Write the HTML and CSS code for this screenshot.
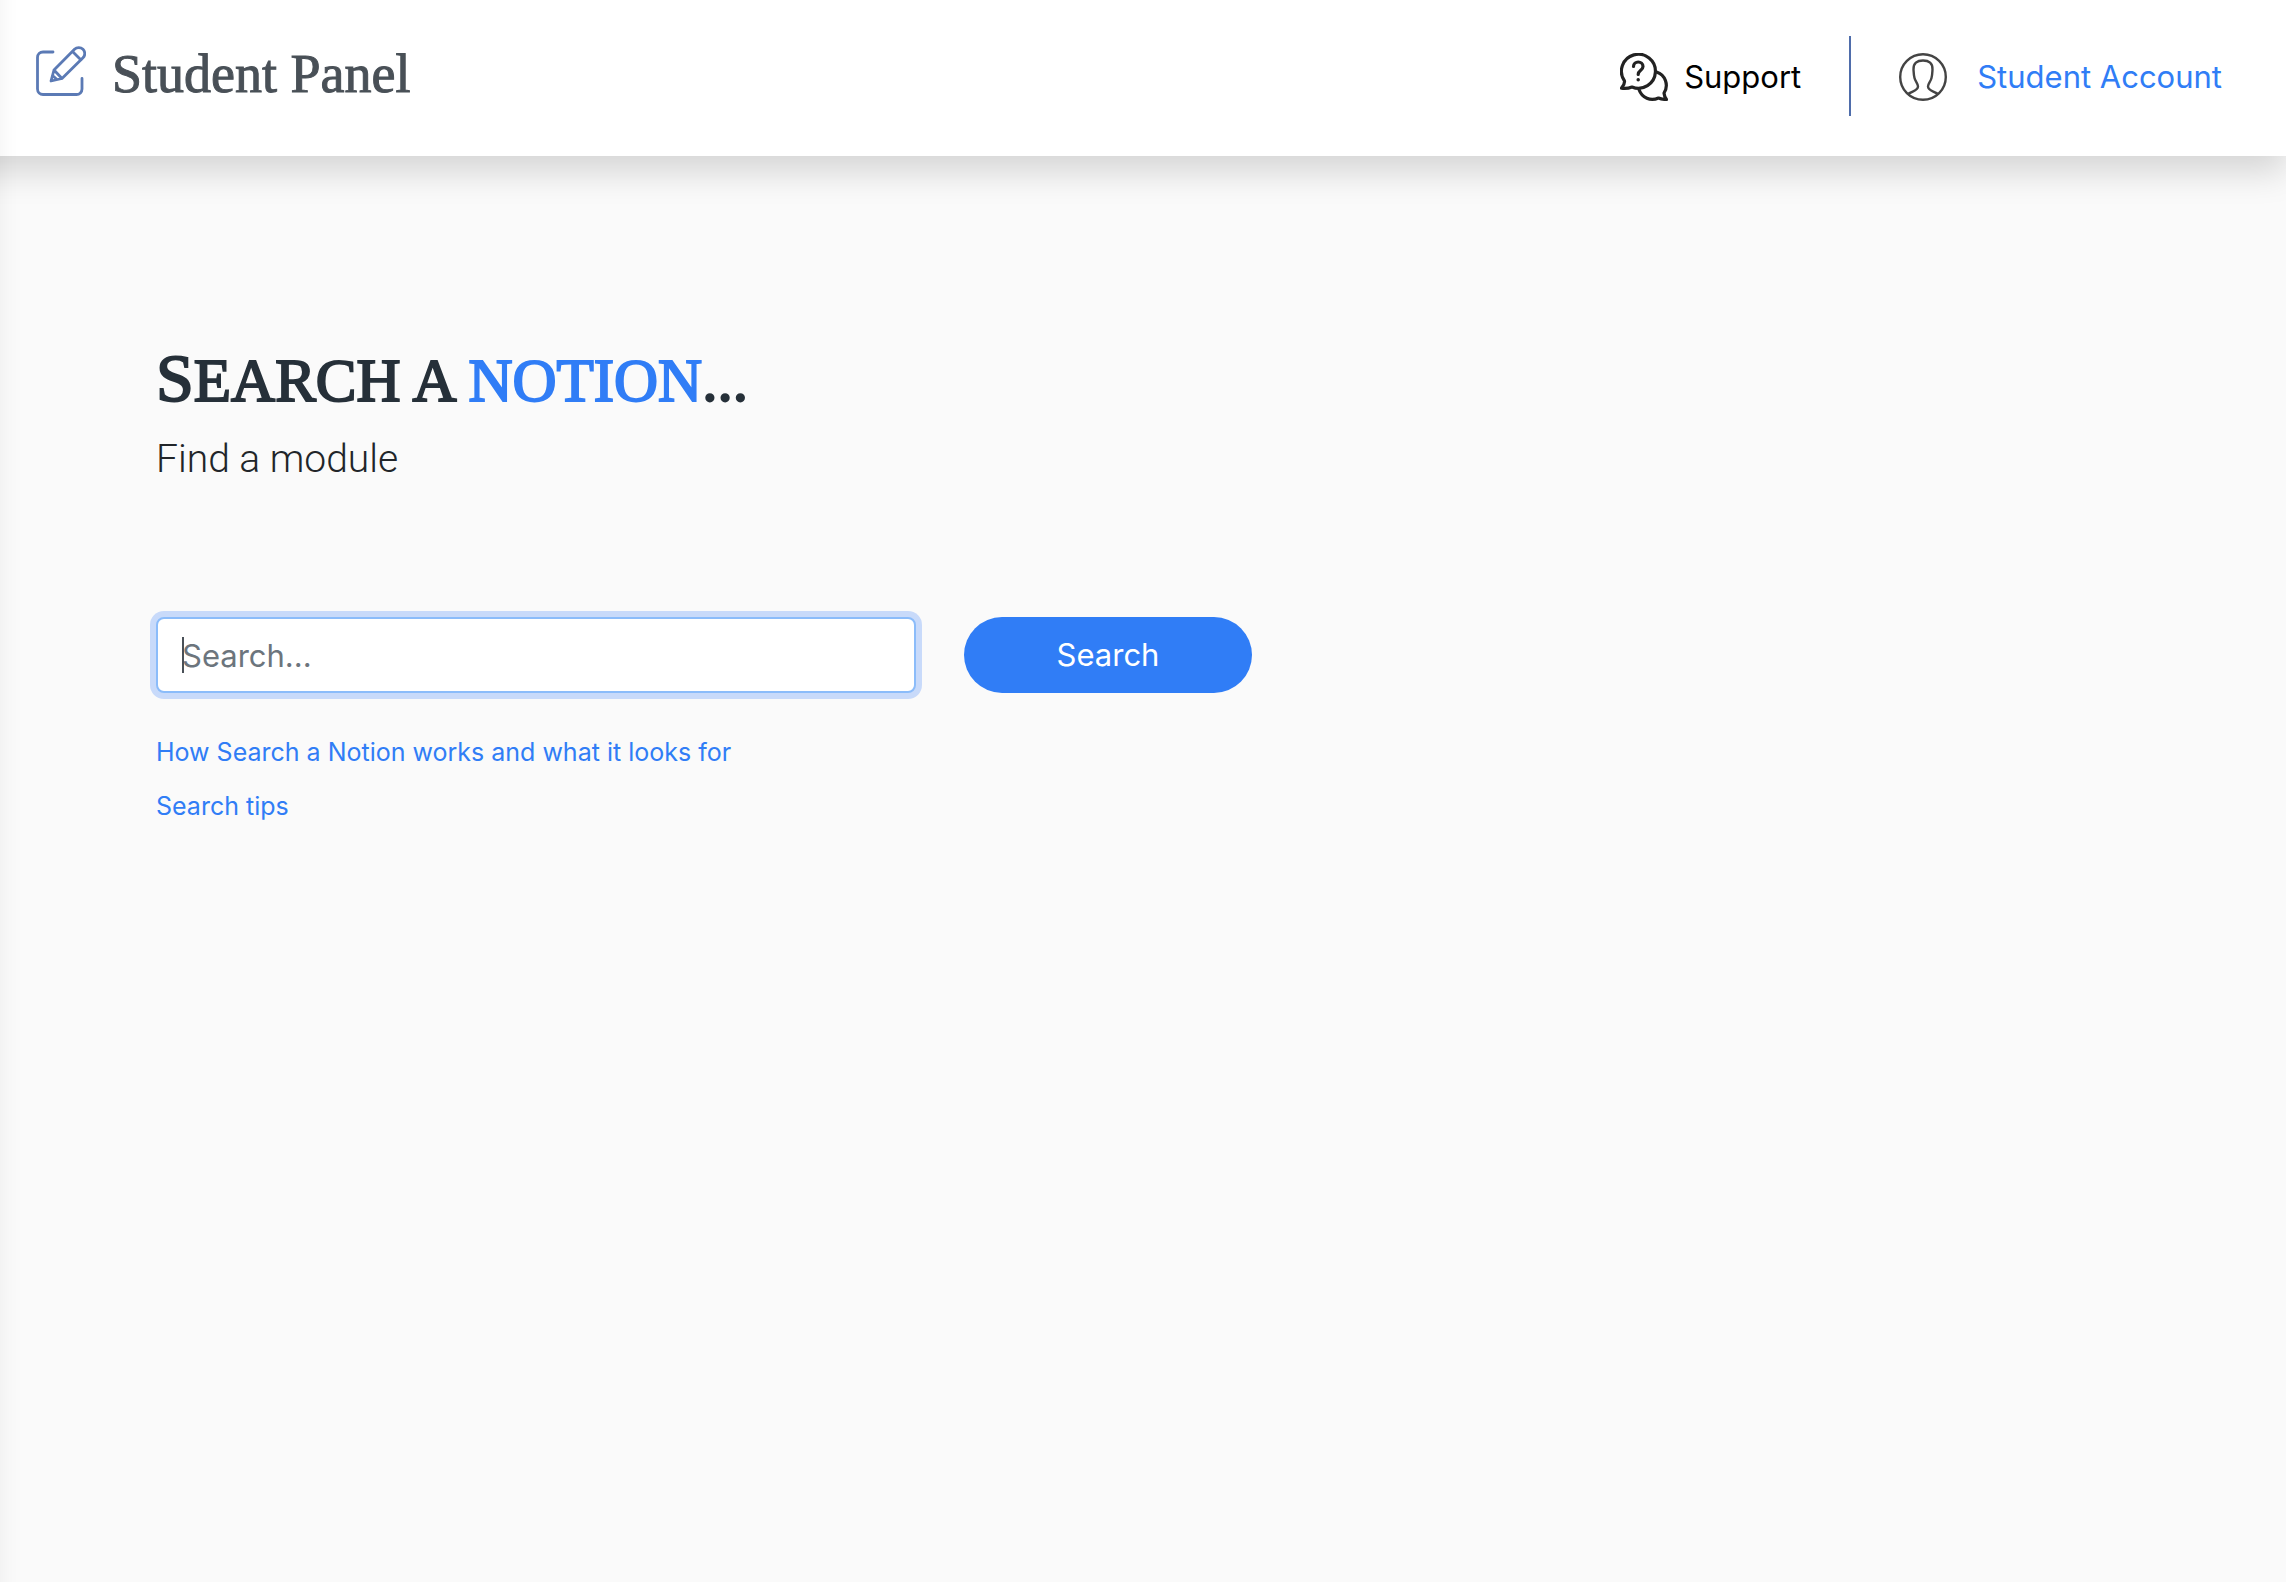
FILE: index.html
```html
<!DOCTYPE html>
<html lang="en">
<head>
    <meta charset="UTF-8">
    <meta name="viewport" content="width=device-width, initial-scale=1.0">
    <title>Student Panel</title>
    <link rel="stylesheet" href="styles.css">
</head>
<body>
    <aside class="sidebar"></aside>

    <header class="navbar">
        <a class="brand" href="#">
            <svg class="brand-icon" viewBox="0 0 50 50" fill="none" stroke="#5b7ab5" stroke-width="2.8" stroke-linecap="round" stroke-linejoin="round">
                <path d="M17 6H7a5.500 5.500 0 0 0-5.500 5.500v31.500a5.500 5.500 0 0 0 5.500 5.500h33.500a5.500 5.500 0 0 0 5.500-5.500V32.500"/>
                <path d="M15 35l3-11L38.500 3.300a6 6 0 0 1 8.500 8.500L26 32.500zM18 24l8 8.500M36.500 5.500l8.500 8.500M16.500 29.500l4.500 4"/>
            </svg>
            <span class="brand-name">Student Panel</span>
        </a>
        <nav class="nav-links">
            <a class="support" href="#">
                <svg class="nav-icon" viewBox="0 0 48 48" fill="none" stroke="#222" stroke-width="3.2" stroke-linejoin="round">
                    <path d="M4.500 28A17 17 0 1 1 12 34c-3 1.200-6.500 1.800-10.500 1.200C3.500 33 4.700 30.500 4.500 28z"/>
                    <path d="M36.500 19a14 14 0 0 1 7.500 21c.2 2.500 1 4.500 2.500 6.500-3.500 0-6-.6-8-1.500-8 3.500-16.500 0-19.500-8.500"/>
                    <path d="M13.500 13.500c0-6 9.500-6 9.500 0 0 4-4.800 3.500-4.800 8" stroke-linecap="round"/>
                    <circle cx="18.200" cy="26.800" r="1" fill="#222" stroke-width="1.500"/>
                </svg>
                Support
            </a>
            <a class="account" href="#">
                <svg class="nav-icon" viewBox="0 0 48 48" fill="none" stroke="#444" stroke-width="2.4">
                    <circle cx="24" cy="24" r="22.800"/>
                    <path d="M8.500 41.500c4-3.500 10.500-3.500 10.500-8 0-3-2.500-4.500-3.500-8.500-.8-3-.8-5-1-8.500C14.200 10 18 7.500 24 7.500s9.800 2.500 9.500 9c-.2 3.500-.2 5.500-1 8.500-1 4-3.500 5.500-3.500 8.500 0 4.500 6.500 4.500 10.500 8"/>
                </svg>
                Student Account
            </a>
        </nav>
    </header>

    <main class="content">
        <h1 class="title">Search a <span class="notion">notion</span>...</h1>
        <p class="subtitle">Find a module</p>

        <form class="search-form">
            <div class="search-field">
                <input class="search-input" type="text" name="search" placeholder="Search..." aria-label="Search">
                <span class="caret"></span>
            </div>
            <button class="search-button" type="submit">Search</button>
        </form>

        <ul class="help-links">
            <li><a href="#">How Search a Notion works and what it looks for</a></li>
            <li><a href="#">Search tips</a></li>
        </ul>
    </main>
</body>
</html>
```
FILE: styles.css
```css
* {
    box-sizing: border-box;
}
body {
    margin: 0;
    min-height: 100vh;
    overflow-x: hidden;
    background: #fafafa;
    color: #212529;
    font-family: Inter, "Liberation Sans", sans-serif;
    font-size: 31px;
    line-height: 48px;
}
a {
    color: #307df6;
    text-decoration: none;
}
/* closed side menu, only its shadow reaches the page */
.sidebar {
    position: fixed;
    top: -40px;
    bottom: -40px;
    left: -400px;
    width: 400px;
    z-index: 2;
    box-shadow: 0 0 20px rgba(0, 0, 0, 0.06);
}
.navbar {
    display: flex;
    justify-content: space-between;
    align-items: center;
    height: 156px;
    margin-left: -40px;
    padding: 0 64px 4px 76px;
    background: #fff;
    box-shadow: 0 16px 32px rgba(0, 0, 0, 0.15);
}
.brand {
    display: flex;
    align-items: center;
    gap: 26px;
    margin-bottom: 10px;
    color: #495057;
}
.brand-icon {
    width: 50px;
    height: 50px;
}
.brand-name {
    padding-top: 6px;
    font-family: "Liberation Serif", serif;
    font-size: 54px;
    line-height: 64px;
    -webkit-text-stroke: 1px #495057;
}
.nav-links {
    display: flex;
    align-items: center;
}
.nav-icon {
    width: 48px;
    height: 48px;
}
.support,
.account {
    display: flex;
    align-items: center;
    height: 80px;
    padding-top: 2px;
}
.support {
    gap: 16px;
    padding-right: 48px;
    border-right: 2px solid #4f6dab;
    color: #000;
}
.account {
    gap: 30px;
    padding-left: 48px;
}
.content {
    padding: 180px 156px;
}
.title {
    margin: 0;
    color: #263039;
    font-family: "Liberation Serif", serif;
    font-size: 61px;
    font-weight: 400;
    line-height: 84px;
    text-transform: uppercase;
    -webkit-text-stroke: 2px;
}
.title::first-letter {
    font-size: 68px;
}
.notion {
    color: #307df6;
}
.subtitle {
    margin: 6px 0 0;
    font-family: Roboto, sans-serif;
    font-size: 39px;
    font-weight: 300;
    line-height: 60px;
}
.search-form {
    display: flex;
    gap: 48px;
    margin-top: 128px;
}
.search-field {
    position: relative;
    width: 760px;
}
.search-input {
    width: 100%;
    height: 76px;
    padding: 0 24px;
    border: 2px solid #8bbcfa;
    border-radius: 8px;
    outline: none;
    background: #fff;
    box-shadow: 0 0 0 6px #c8dafa;
    color: #495057;
    font: inherit;
}
.search-input::placeholder {
    color: #6c757d;
    opacity: 1;
}
.caret {
    position: absolute;
    top: 20px;
    left: 26px;
    width: 2px;
    height: 36px;
    background: #495057;
}
.search-button {
    width: 288px;
    height: 76px;
    border: 0;
    border-radius: 38px;
    background: #307df6;
    color: #fff;
    font: inherit;
}
.help-links {
    margin: 32px 0 0;
    padding: 0;
    list-style: none;
    font-size: 25px;
    line-height: 54px;
}
```
